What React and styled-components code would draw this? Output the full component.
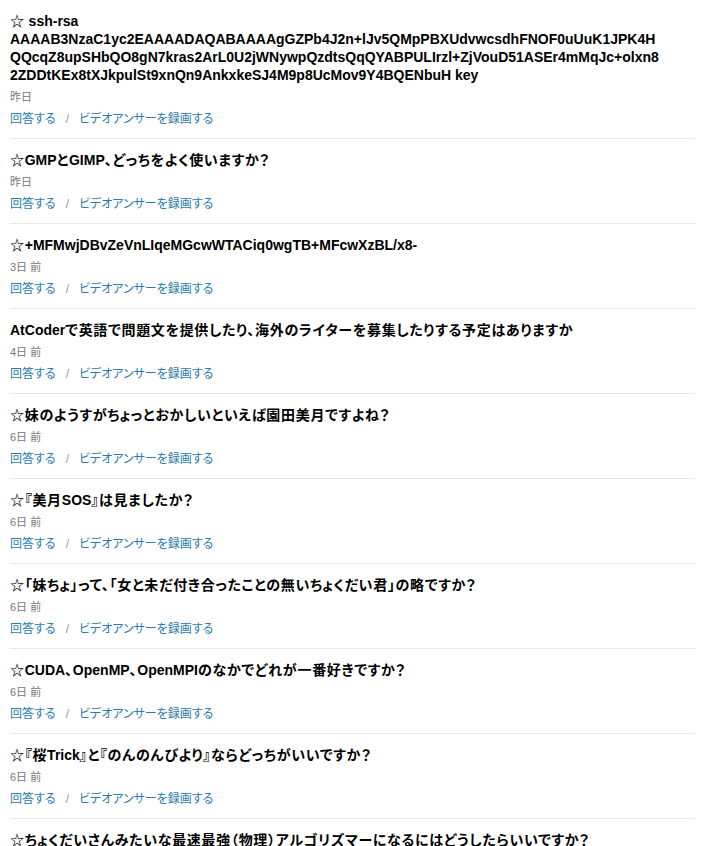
import React from "react";
import styled, { createGlobalStyle } from "styled-components";

const GlobalStyle = createGlobalStyle`
  body {
    margin: 0;
    background: #fff;
    font-family: "Liberation Sans", "Noto Sans CJK JP", sans-serif;
  }
`

const Page = styled.div`
  padding: 12px 24px 0 10px;
`

const Item = styled.div`
  padding: 0 0 10px;
  margin-bottom: 12px;
  border-bottom: 1px solid #e8e8e8;
`

const Title = styled.div`
  padding-right: 30px;
  font-size: 14px;
  line-height: 18px;
  font-weight: bold;
  color: #000;
  overflow-wrap: break-word;
  margin-bottom: 5px;
`

// japanese runs in the title are a little wider in the original font
const Jp = styled.span`
  font-feature-settings: "palt";
  letter-spacing: 0.7px;
`

const Date = styled.div`
  font-size: 11px;
  line-height: 16px;
  color: #777;
  margin-bottom: 5px;
  font-feature-settings: "palt";
`

const Links = styled.div`
  font-size: 12px;
  line-height: 18px;
  font-feature-settings: "palt";
`

const ActionLink = styled.a`
  color: #2b7bac;
  text-decoration: none;
  cursor: pointer;
`

const Slash = styled.span`
  color: #999;
  margin: 0 10px;
`

const questions = [
  {
    title:
      "☆ ssh-rsa AAAAB3NzaC1yc2EAAAADAQABAAAAgGZPb4J2n+lJv5QMpPBXUdvwcsdhFNOF0uUuK1JPK4HQQcqZ8upSHbQO8gN7kras2ArL0U2jWNywpQzdtsQqQYABPULIrzl+ZjVouD51ASEr4mMqJc+olxn82ZDDtKEx8tXJkpulSt9xnQn9AnkxkeSJ4M9p8UcMov9Y4BQENbuH key",
    date: "昨日",
  },
  { title: "☆GMPとGIMP、どっちをよく使いますか？", date: "昨日" },
  { title: "☆+MFMwjDBvZeVnLIqeMGcwWTACiq0wgTB+MFcwXzBL/x8-", date: "3日 前" },
  {
    title: "AtCoderで英語で問題文を提供したり、海外のライターを募集したりする予定はありますか",
    date: "4日 前",
  },
  { title: "☆妹のようすがちょっとおかしいといえば園田美月ですよね？", date: "6日 前" },
  { title: "☆『美月SOS』は見ましたか？", date: "6日 前" },
  {
    title: "☆「妹ちょ」って、「女と未だ付き合ったことの無いちょくだい君」の略ですか？",
    date: "6日 前",
  },
  { title: "☆CUDA、OpenMP、OpenMPIのなかでどれが一番好きですか？", date: "6日 前" },
  { title: "☆『桜Trick』と『のんのんびより』ならどっちがいいですか？", date: "6日 前" },
  {
    title: "☆ちょくだいさんみたいな最速最強（物理）アルゴリズマーになるにはどうしたらいいですか？",
    date: "6日 前",
  },
];

const jpRun = /([\u2606\u3000-\u30ff\u4e00-\u9fff\uff00-\uffef]+)/;

const renderTitle = (text) =>
  text.split(jpRun).map((part, i) =>
    i % 2 === 1 ? <Jp key={i}>{part}</Jp> : part
  );

const App = () => {
  return (
    <Page>
      <GlobalStyle />
      {questions.map((q, i) => (
        <Item key={i}>
          <Title>{renderTitle(q.title)}</Title>
          <Date>{q.date}</Date>
          <Links>
            <ActionLink>回答する</ActionLink>
            <Slash>/</Slash>
            <ActionLink>ビデオアンサーを録画する</ActionLink>
          </Links>
        </Item>
      ))}
    </Page>
  );
};

export default App;
